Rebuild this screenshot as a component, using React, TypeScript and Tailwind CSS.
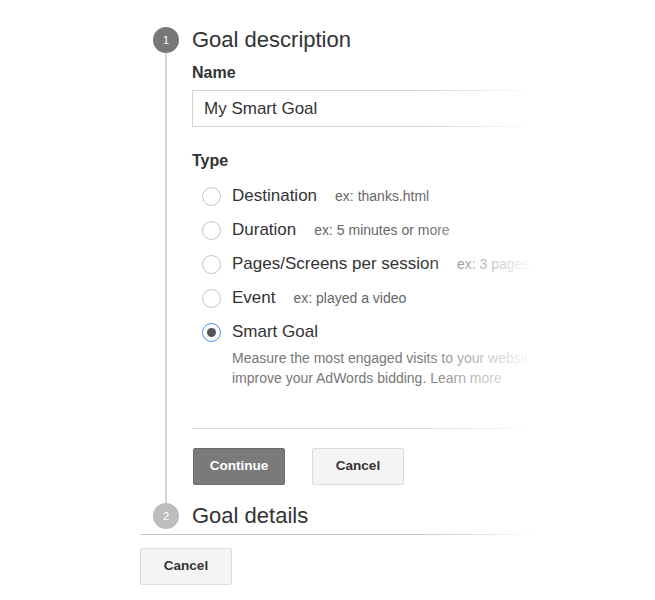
import React from "react";

const types = [
  { label: "Destination", hint: "ex: thanks.html" },
  { label: "Duration", hint: "ex: 5 minutes or more" },
  { label: "Pages/Screens per session", hint: "ex: 3 pages" },
  { label: "Event", hint: "ex: played a video" },
];

function Radio({ checked }: { checked?: boolean }) {
  return (
    <span
      className={
        "flex h-[19px] w-[19px] shrink-0 items-center justify-center rounded-full border bg-white " +
        (checked ? "border-[#4d8ff5]" : "border-[#c4c4c4]")
      }
    >
      {checked && <span className="h-[9px] w-[9px] rounded-full bg-[#555]" />}
    </span>
  );
}

export default function App() {
  return (
    <div
      className="h-[600px] w-[655px] bg-white text-[#333]"
      style={{ fontFamily: '"Liberation Sans", Arial, sans-serif' }}
    >
      <div className="relative ml-[140px] w-[395px] overflow-hidden pt-[27px]">
        {/* Step 1 */}
        <div className="flex">
          <div className="flex w-[52px] shrink-0 flex-col items-center">
            <div className="flex h-[26px] w-[26px] items-center justify-center rounded-full bg-[#777] text-[11px] text-white">
              1
            </div>
            <div className="w-[2px] flex-1 bg-[#d4d4d4]" />
          </div>
          <div className="w-[343px] pb-[18px]">
            <div className="text-[22px] leading-[26px] text-[#333]">Goal description</div>
            <div className="mt-[10px] text-[16px] font-bold leading-[20px] text-[#333]">Name</div>
            <div className="mt-[7px] flex h-[37px] w-[343px] items-center border border-r-0 border-[#d4d4d4] pl-[11px] text-[17px] text-[#333]">
              My Smart Goal
            </div>
            <div className="mt-[24px] text-[16px] font-bold leading-[20px] text-[#333]">Type</div>
            <div className="mt-[8px] flex flex-col">
              {types.map((t) => (
                <div key={t.label} className="flex h-[34px] items-center whitespace-nowrap pl-[10px]">
                  <Radio />
                  <span className="ml-[11px] text-[17px] text-[#333]">{t.label}</span>
                  <span className="ml-[18px] text-[14px] text-[#666]">{t.hint}</span>
                </div>
              ))}
              <div className="flex h-[34px] items-center whitespace-nowrap pl-[10px]">
                <Radio checked />
                <span className="ml-[11px] text-[17px] text-[#333]">Smart Goal</span>
              </div>
              <div className="-mt-px whitespace-nowrap pl-[40px] text-[14px] leading-[20px] text-[#777]">
                <div>Measure the most engaged visits to your websit</div>
                <div>improve your AdWords bidding. Learn more</div>
              </div>
            </div>
            <div className="mt-[40px] h-px w-full bg-[#dcdcdc]" />
            <div className="mt-[19px] flex gap-[27px] pl-px">
              <button className="h-[37px] w-[92px] rounded-[2px] border border-[#6a6a6a] bg-[#7a7a7a] text-[13.5px] font-bold text-white">
                Continue
              </button>
              <button className="h-[37px] w-[92px] rounded-[2px] border border-[#dcdcdc] bg-[#f4f4f4] text-[13.5px] font-bold text-[#333]">
                Cancel
              </button>
            </div>
          </div>
        </div>
        {/* Step 2 */}
        <div className="flex items-center">
          <div className="flex w-[52px] shrink-0 justify-center">
            <div className="flex h-[26px] w-[26px] items-center justify-center rounded-full bg-[#bdbdbd] text-[11px] text-white">
              2
            </div>
          </div>
          <div className="text-[22px] leading-[26px] text-[#333]">Goal details</div>
        </div>
        <div className="mt-[5px] h-px w-full bg-[#c8c8c8]" />
        <div className="mt-[13px] pb-[16px]">
          <button className="h-[37px] w-[92px] rounded-[2px] border border-[#dcdcdc] bg-[#f4f4f4] text-[13.5px] font-bold text-[#333]">
            Cancel
          </button>
        </div>
        <div className="pointer-events-none absolute inset-y-0 right-0 w-[115px] bg-linear-to-r from-white/0 to-white" />
      </div>
    </div>
  );
}
